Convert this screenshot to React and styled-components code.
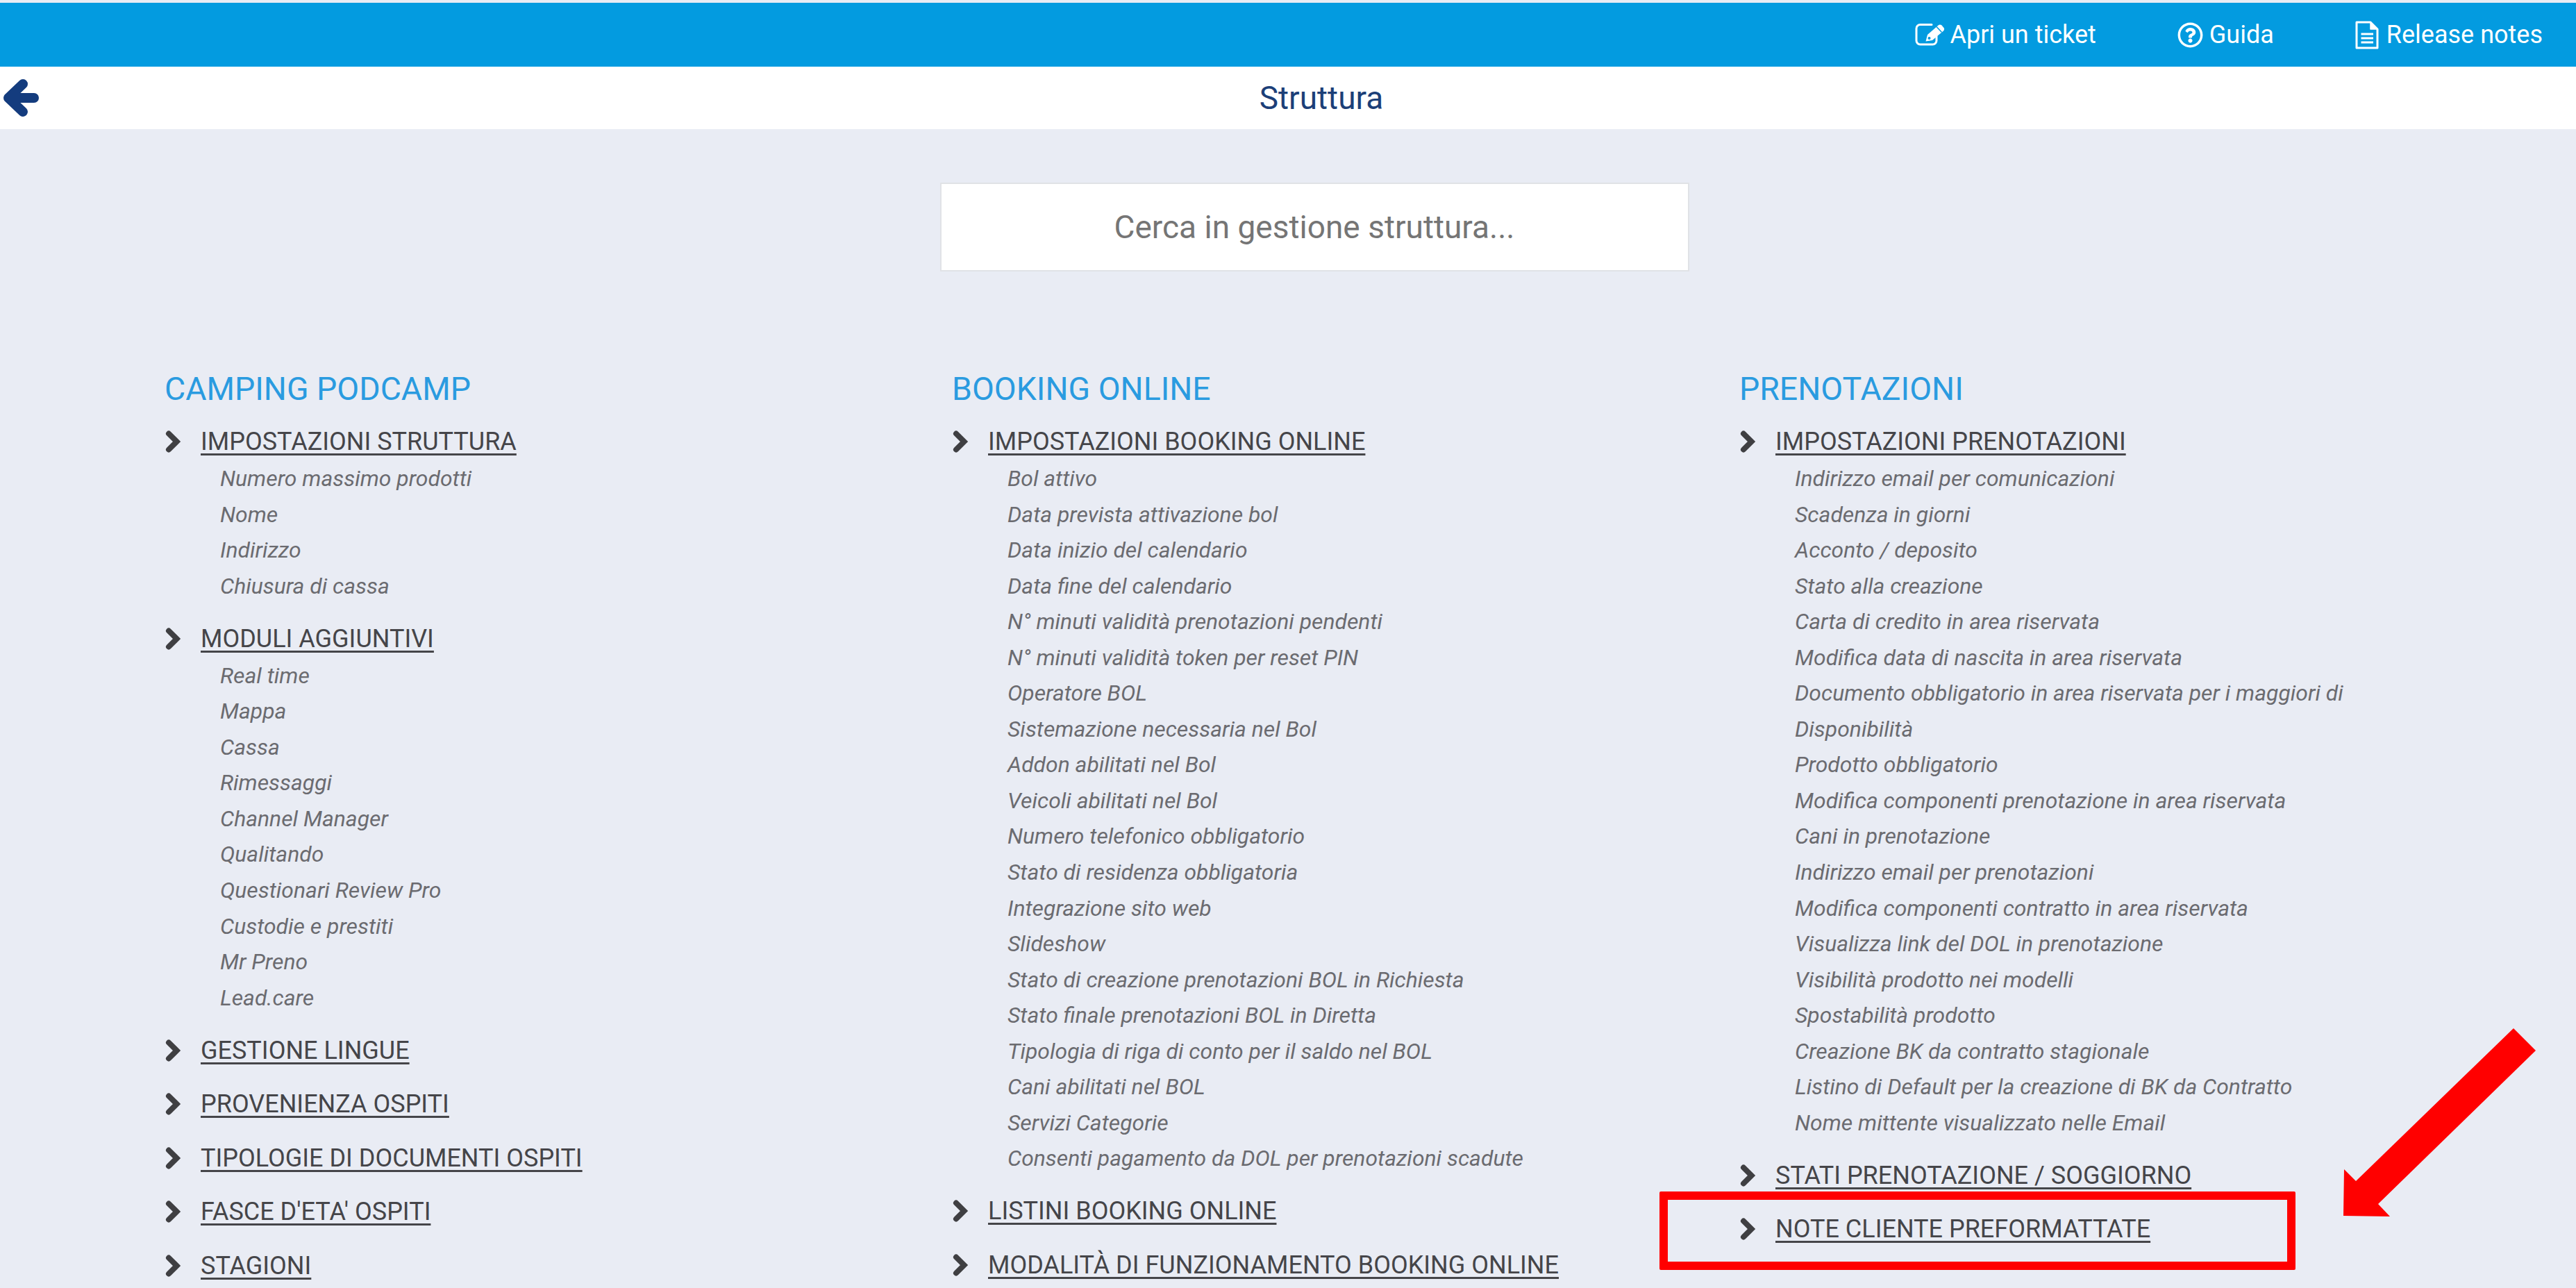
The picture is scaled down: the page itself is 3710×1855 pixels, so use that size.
import React from "react";
import styled, { createGlobalStyle } from "styled-components";
import { FaRegQuestionCircle } from "react-icons/fa";

const Global = createGlobalStyle`
  html, body { margin: 0; padding: 0; background: #e9ecf4; }
  body { font-family: Roboto, "Liberation Sans", sans-serif; }
`;

const Page = styled.div`
  position: relative;
  width: 3710px;
  height: 1855px;
  overflow: hidden;
  background: #e9ecf4;
  padding-top: 4px;
  box-sizing: border-box;
`;

const TopBar = styled.header`
  height: 92px;
  background: #039be0;
  display: flex;
  align-items: center;
  justify-content: flex-end;
  gap: 117px;
  padding-right: 48px;
`;

const TopLink = styled.a`
  display: flex;
  align-items: center;
  gap: ${(p) => p.$gap}px;
  color: #fff;
  font-size: 36px;
  line-height: 44px;
  svg { display: block; flex: none; }
`;

const TitleBar = styled.div`
  height: 90px;
  background: #fff;
  display: flex;
  align-items: center;
`;

const BackSvg = styled.svg`
  flex: none;
  width: 60px;
  height: 60px;
  color: #143c7e;
`;

const Title = styled.h1`
  flex: 1;
  margin: 0;
  padding: 0 0 0 36px;
  text-align: center;
  font-size: 46px;
  font-weight: 400;
  color: #1c3f78;
`;

const SearchWrap = styled.div`
  display: flex;
  justify-content: center;
  padding: 77px 0 0 76px;
`;

const Search = styled.div`
  width: 1079px;
  height: 128px;
  box-sizing: border-box;
  background: #fff;
  border: 2px solid #e0e2e6;
  display: flex;
  align-items: center;
  justify-content: center;
  font-size: 46px;
  color: #757575;
`;

const Columns = styled.div`
  display: grid;
  grid-template-columns: repeat(3, 1134px);
  padding: 139px 0 0 237px;
`;

const Column = styled.section``;

const Heading = styled.h2`
  margin: 0 0 20px;
  font-size: 46.4px;
  line-height: 60px;
  font-weight: 400;
  color: #2a9be0;
`;

const Group = styled.div`
  margin-top: ${(p) => p.$nudge || 0}px;
  margin-bottom: 25.5px;
`;

const LinkRow = styled.div`
  display: flex;
  align-items: center;
  height: 52px;
  font-size: 36px;
  color: #454549;
`;

const ChevronSvg = styled.svg`
  flex: none;
  width: 26px;
  height: 34px;
  margin: 0 26px 0 1px;
  color: #3f3f42;
`;

const LinkText = styled.span`
  text-decoration: underline;
  text-underline-offset: 5px;
  text-decoration-thickness: 2.5px;
  margin-left: -1px;
`;

const SubList = styled.ul`
  list-style: none;
  margin: 0 0 -2px;
  padding: 2px 0 0 80px;
`;

const SubItem = styled.li`
  height: 51.55px;
  line-height: 51.55px;
  font-size: 31.9px;
  font-style: italic;
  color: #6b6b70;
  white-space: nowrap;
`;

const NoteBox = styled.div`
  position: absolute;
  left: 2390px;
  top: 1716px;
  width: 916px;
  height: 113px;
  box-sizing: border-box;
  border: 12px solid #ff0000;
  border-radius: 2px;
`;

const ArrowMark = styled.svg`
  position: absolute;
  left: 0;
  top: 0;
  width: 3710px;
  height: 1855px;
  pointer-events: none;
`;

const EditIcon = () => (
  <svg width="44" height="34" viewBox="0 0 44 34" fill="none">
    <path d="M24 2.5H7.5a5.5 5.5 0 0 0-5.5 5.5V25.500a5.500 5.500 0 0 0 5.500 5.500H25.500a5.500 5.500 0 0 0 5.500-5.500V19" stroke="#fff" strokeWidth="3" strokeLinecap="round" />
    <path d="M15.500 26.500 18 17 33.500 3.500 Q36 1.500 38.500 3.500 L41.500 7 Q43 9.500 41 11.500 L25 25 Z" fill="#fff" />
    <path d="M31 5.500 38.500 13.500" stroke="#039be0" strokeWidth="1.500" />
    <circle cx="20.500" cy="22" r="2" fill="#039be0" />
  </svg>
);

const FileIcon = () => (
  <svg width="34" height="41" viewBox="0 0 34 41" fill="none">
    <path d="M2 2H22L32 12V39H2Z" stroke="#fff" strokeWidth="3" strokeLinejoin="round" />
    <path d="M22 2V12H32Z" fill="#fff" stroke="#fff" strokeWidth="1.500" strokeLinejoin="round" />
    <path d="M8.500 19H26M8.500 25H26M8.500 31H26" stroke="#fff" strokeWidth="3" />
  </svg>
);

const BackIcon = () => (
  <BackSvg viewBox="0 0 60 60" fill="none">
    <path d="M33 13 12 33 33 53M12 33H49" stroke="currentColor" strokeWidth="14" strokeLinecap="round" strokeLinejoin="round" transform="translate(0,-3)" />
  </BackSvg>
);

const Chevron = () => (
  <ChevronSvg viewBox="0 0 26 34" fill="none">
    <path d="M5 5.500 16.500 17 5 28.500" stroke="currentColor" strokeWidth="8" strokeLinecap="round" />
  </ChevronSvg>
);

const data = [
  {
    title: "CAMPING PODCAMP",
    groups: [
      ["IMPOSTAZIONI STRUTTURA", ["Numero massimo prodotti", "Nome", "Indirizzo", "Chiusura di cassa"]],
      ["MODULI AGGIUNTIVI", ["Real time", "Mappa", "Cassa", "Rimessaggi", "Channel Manager", "Qualitando", "Questionari Review Pro", "Custodie e prestiti", "Mr Preno", "Lead.care"]],
      ["GESTIONE LINGUE"],
      ["PROVENIENZA OSPITI"],
      ["TIPOLOGIE DI DOCUMENTI OSPITI"],
      ["FASCE D'ETA' OSPITI"],
      ["STAGIONI"],
    ],
  },
  {
    title: "BOOKING ONLINE",
    groups: [
      ["IMPOSTAZIONI BOOKING ONLINE", ["Bol attivo", "Data prevista attivazione bol", "Data inizio del calendario", "Data fine del calendario", "N° minuti validità prenotazioni pendenti", "N° minuti validità token per reset PIN", "Operatore BOL", "Sistemazione necessaria nel Bol", "Addon abilitati nel Bol", "Veicoli abilitati nel Bol", "Numero telefonico obbligatorio", "Stato di residenza obbligatoria", "Integrazione sito web", "Slideshow", "Stato di creazione prenotazioni BOL in Richiesta", "Stato finale prenotazioni BOL in Diretta", "Tipologia di riga di conto per il saldo nel BOL", "Cani abilitati nel BOL", "Servizi Categorie", "Consenti pagamento da DOL per prenotazioni scadute"]],
      ["LISTINI BOOKING ONLINE"],
      ["MODALITÀ DI FUNZIONAMENTO BOOKING ONLINE"],
    ],
  },
  {
    title: "PRENOTAZIONI",
    groups: [
      ["IMPOSTAZIONI PRENOTAZIONI", ["Indirizzo email per comunicazioni", "Scadenza in giorni", "Acconto / deposito", "Stato alla creazione", "Carta di credito in area riservata", "Modifica data di nascita in area riservata", "Documento obbligatorio in area riservata per i maggiori di", "Disponibilità", "Prodotto obbligatorio", "Modifica componenti prenotazione in area riservata", "Cani in prenotazione", "Indirizzo email per prenotazioni", "Modifica componenti contratto in area riservata", "Visualizza link del DOL in prenotazione", "Visibilità prodotto nei modelli", "Spostabilità prodotto", "Creazione BK da contratto stagionale", "Listino di Default per la creazione di BK da Contratto", "Nome mittente visualizzato nelle Email"]],
      ["STATI PRENOTAZIONE / SOGGIORNO", null, -2],
      ["NOTE CLIENTE PREFORMATTATE", null, 5],
    ],
  },
];

export default function App() {
  return (
    <Page>
      <Global />
      <TopBar>
        <TopLink $gap={6}><EditIcon />Apri un ticket</TopLink>
        <TopLink $gap={9}><FaRegQuestionCircle size={37} />Guida</TopLink>
        <TopLink $gap={11}><FileIcon />Release notes</TopLink>
      </TopBar>
      <TitleBar>
        <BackIcon />
        <Title>Struttura</Title>
      </TitleBar>
      <SearchWrap>
        <Search>Cerca in gestione struttura...</Search>
      </SearchWrap>
      <Columns>
        {data.map((col) => (
          <Column key={col.title}>
            <Heading>{col.title}</Heading>
            {col.groups.map(([name, subs, nudge]) => (
              <Group key={name} $nudge={nudge}>
                <LinkRow><Chevron /><LinkText>{name}</LinkText></LinkRow>
                {subs && (
                  <SubList>
                    {subs.map((s) => <SubItem key={s}>{s}</SubItem>)}
                  </SubList>
                )}
              </Group>
            ))}
          </Column>
        ))}
      </Columns>
      <NoteBox />
      <ArrowMark viewBox="0 0 3710 1855">
        <polygon points="3620,1481 3652,1513 3425,1734 3442,1752 3375,1751 3376,1684 3393,1701" fill="#ff0000" />
      </ArrowMark>
    </Page>
  );
}
